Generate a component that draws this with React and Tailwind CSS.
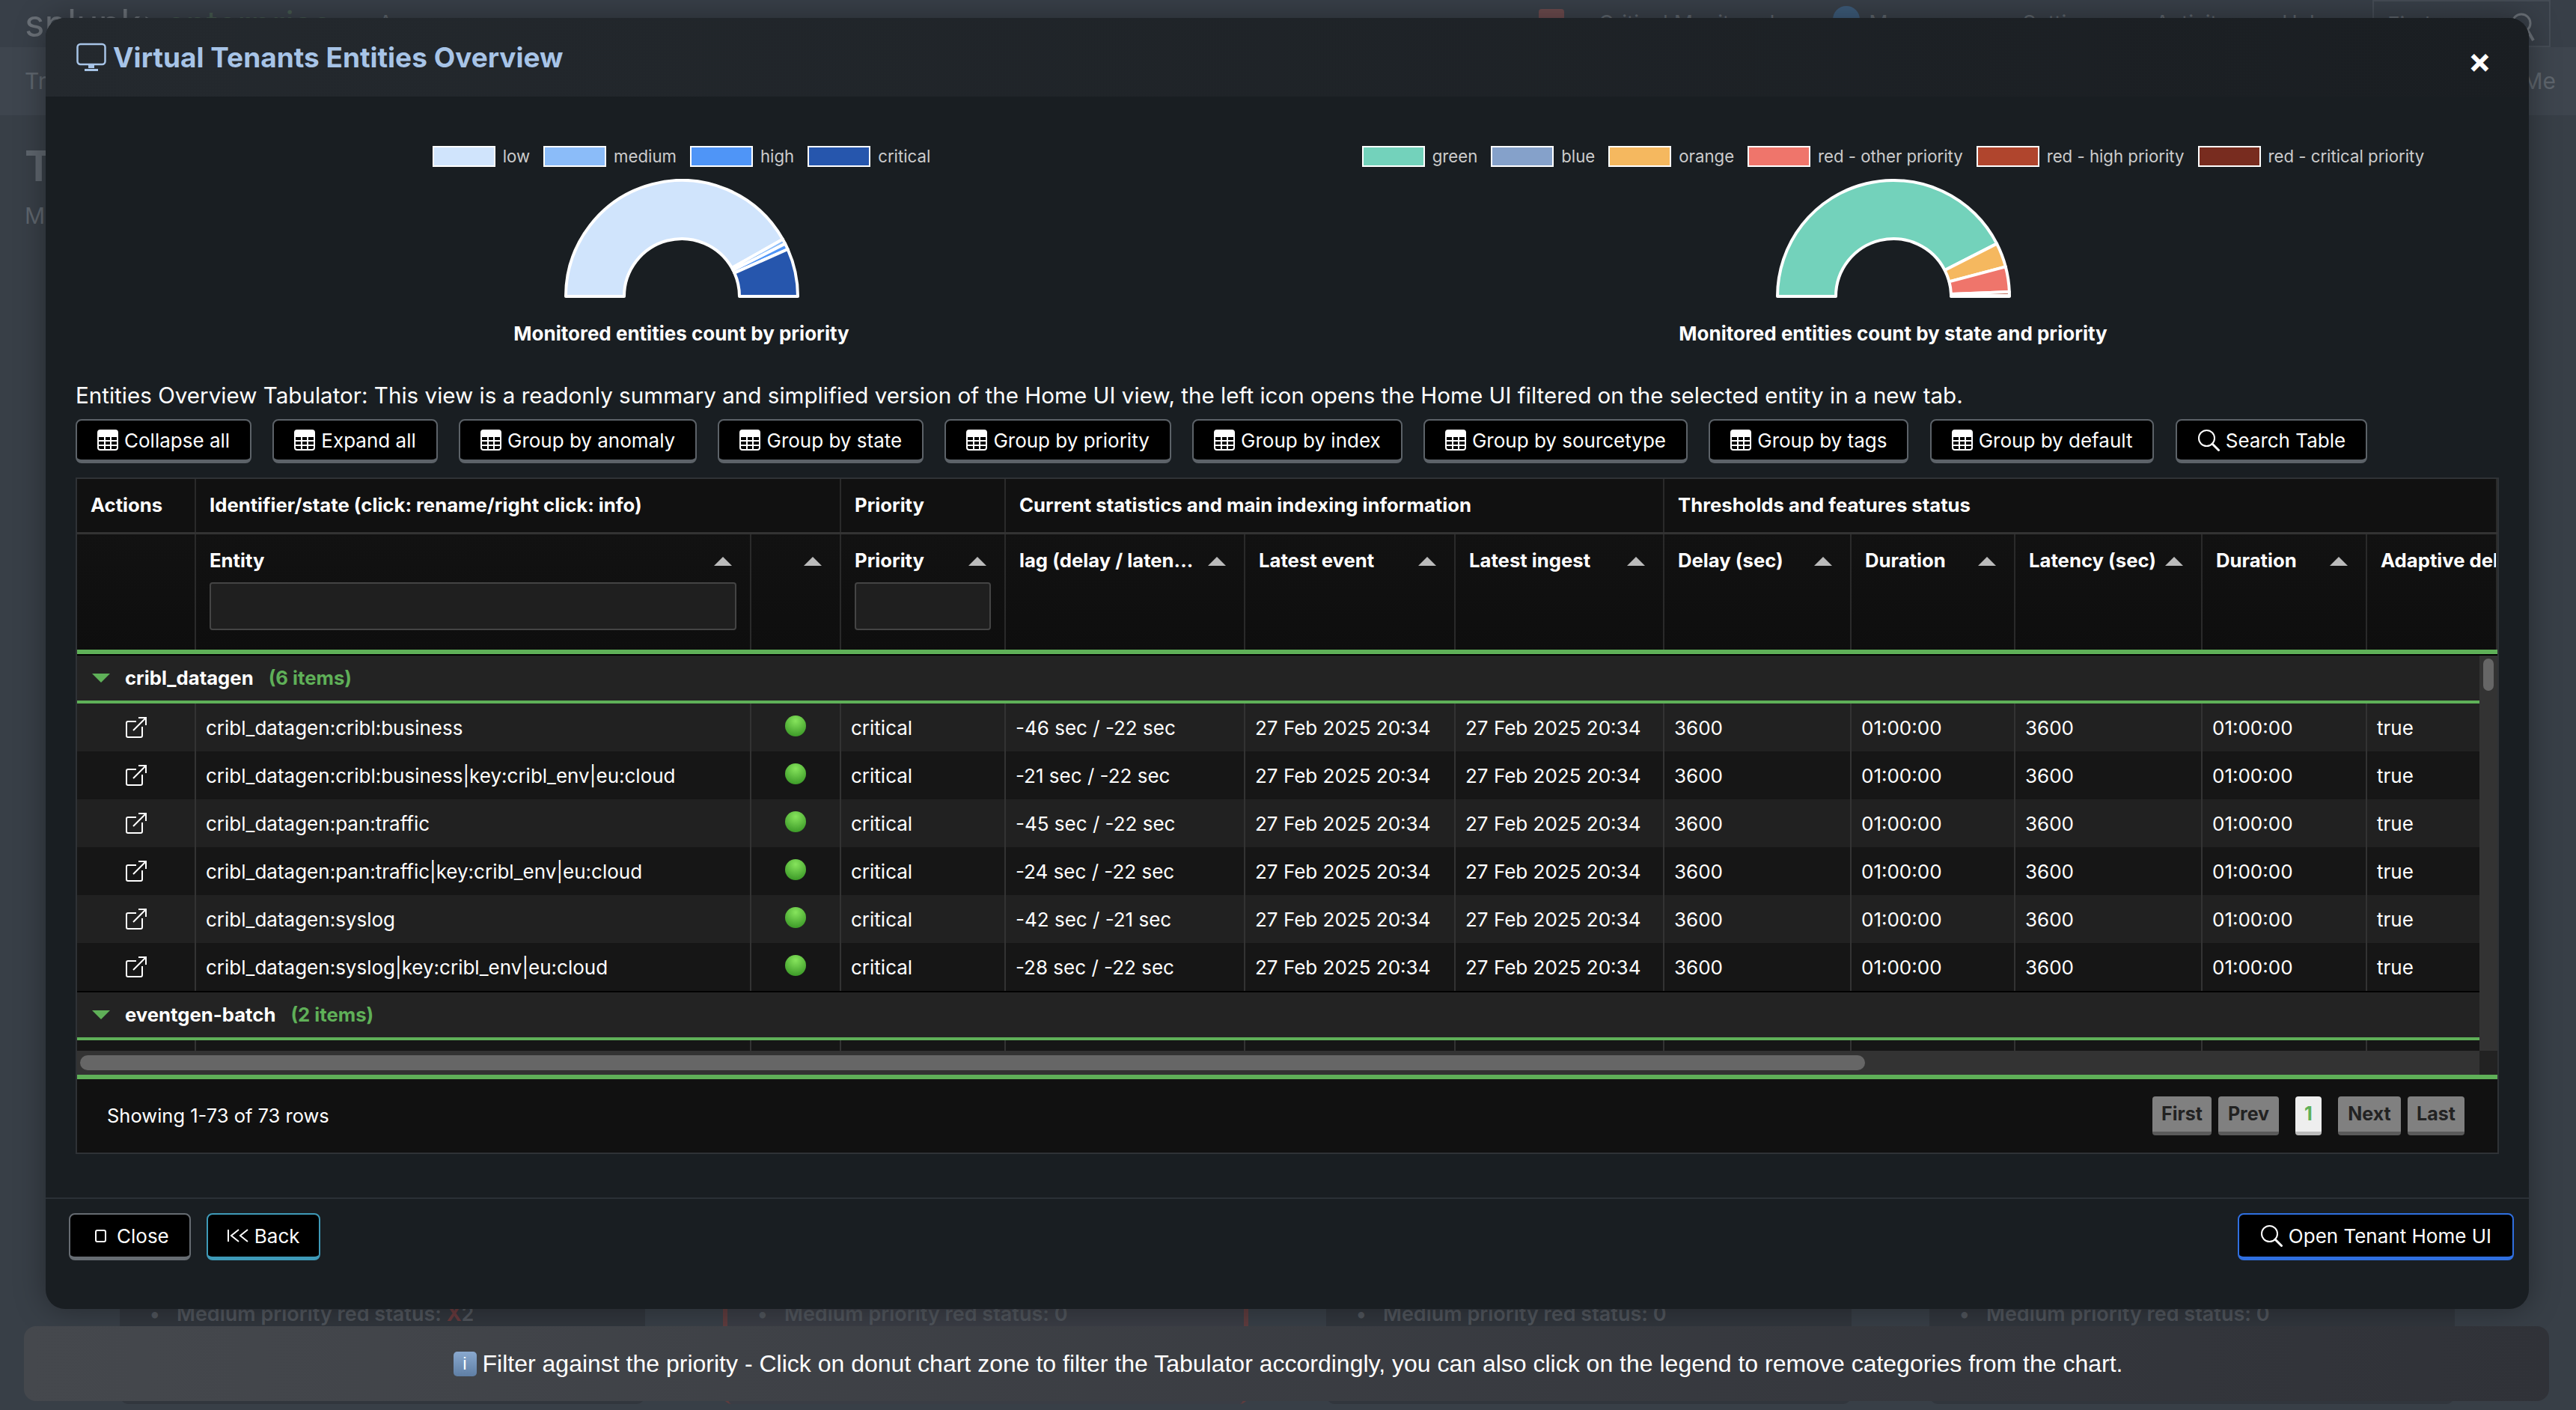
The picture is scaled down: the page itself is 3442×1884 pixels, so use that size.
import React from 'react';

const TOP_COLS = 'grid grid-cols-[159px_862px_220px_880px_1fr]';
const HEAD_COLS = 'grid grid-cols-[159px_742px_120px_220px_320px_281px_279px_250px_219px_250px_220px_1fr]';
const DATA_COLS = 'grid grid-cols-[159px_742px_120px_220px_320px_281px_279px_250px_219px_250px_220px_150px]';
const CELL = 'flex items-center pl-[13px] border-r-2 border-[#333333] whitespace-nowrap';

const CHART_ONE = {
  legend: [
    ['low', '#d0e4fc'],
    ['medium', '#8bbcf9'],
    ['high', '#4f95f7'],
    ['critical', '#2656ad'],
  ],
  slices: [
    [180, 29.5, '#d0e4fc'],
    [29.5, 27, '#8bbcf9'],
    [27, 24, '#4f95f7'],
    [24, 0, '#2656ad'],
  ],
  title: 'Monitored entities count by priority',
};

const CHART_TWO = {
  legend: [
    ['green', '#73d2bb'],
    ['blue', '#85a1ca'],
    ['orange', '#f5b85f'],
    ['red - other priority', '#ef756b'],
    ['red - high priority', '#b0452d'],
    ['red - critical priority', '#782c1f'],
  ],
  slices: [
    [180, 27, '#73d2bb'],
    [27, 14.8, '#f5b85f'],
    [14.8, 2.2, '#ef756b'],
    [2.2, 0.4, '#b0452d'],
    [0.4, 0, '#782c1f'],
  ],
  title: 'Monitored entities count by state and priority',
};

const BUTTONS = [
  'Collapse all',
  'Expand all',
  'Group by anomaly',
  'Group by state',
  'Group by priority',
  'Group by index',
  'Group by sourcetype',
  'Group by tags',
  'Group by default',
];

const HEADERS = [
  ['', false],
  ['Entity', true],
  ['', true],
  ['Priority', true],
  ['lag (delay / laten...', true],
  ['Latest event', true],
  ['Latest ingest', true],
  ['Delay (sec)', true],
  ['Duration', true],
  ['Latency (sec)', true],
  ['Duration', true],
  ['Adaptive delay', false],
];

const ROWS = [
  ['cribl_datagen:cribl:business', '-46 sec / -22 sec'],
  ['cribl_datagen:cribl:business|key:cribl_env|eu:cloud', '-21 sec / -22 sec'],
  ['cribl_datagen:pan:traffic', '-45 sec / -22 sec'],
  ['cribl_datagen:pan:traffic|key:cribl_env|eu:cloud', '-24 sec / -22 sec'],
  ['cribl_datagen:syslog', '-42 sec / -21 sec'],
  ['cribl_datagen:syslog|key:cribl_env|eu:cloud', '-28 sec / -22 sec'],
];

const point = (r, deg) => {
  const rad = (deg * Math.PI) / 180;
  return `${165 + r * Math.cos(rad)} ${157 - r * Math.sin(rad)}`;
};

const slicePath = (from, to) =>
  `M${point(155, from)} A155 155 0 0 1 ${point(155, to)} L${point(77, to)} A77 77 0 0 0 ${point(77, from)} Z`;

const Donut = ({ slices }) => (
  <svg width="330" height="160" viewBox="0 0 330 160" className="mt-[16px]">
    {slices.map(([from, to, color]) => (
      <path key={from} d={slicePath(from, to)} fill={color} stroke="#fff" strokeWidth="4" strokeLinejoin="round" />
    ))}
  </svg>
);

const Chart = ({ legend, slices, title }) => (
  <div className="flex flex-col items-center">
    <div className="flex items-center gap-[18px] h-[28px] text-[22.2px] text-[#cccccc]">
      {legend.map(([label, color]) => (
        <div key={label} className="flex items-center gap-[10px] whitespace-nowrap">
          <span className="block w-[84px] h-[28px] border-2 border-white" style={{ backgroundColor: color }} />
          {label}
        </div>
      ))}
    </div>
    <Donut slices={slices} />
    <div className="mt-[30px] text-[26px] leading-[34px] font-bold text-white">{title}</div>
  </div>
);

const TableIcon = () => (
  <svg width="28" height="28" viewBox="0 0 28 28" className="shrink-0">
    <rect x="1" y="1" width="26" height="26" rx="3" fill="none" stroke="#fff" strokeWidth="2" />
    <path d="M1 4a3 3 0 0 1 3-3h20a3 3 0 0 1 3 3v6H1z" fill="#fff" />
    <path d="M1 15h26M1 21h26M10 10v17M18 10v17" stroke="#fff" strokeWidth="2" fill="none" />
  </svg>
);

const SearchIcon = () => (
  <svg width="30" height="30" viewBox="0 0 30 30" className="shrink-0 text-white">
    <circle cx="12.5" cy="12.5" r="10.5" fill="none" stroke="currentColor" strokeWidth="2" />
    <path d="M20 20l8.5 8.5" stroke="currentColor" strokeWidth="3" strokeLinecap="round" />
  </svg>
);

const ExternalIcon = () => (
  <svg width="28" height="28" viewBox="0 0 28 28">
    <path d="M14 6H3a2 2 0 0 0-2 2v17a2 2 0 0 0 2 2h17a2 2 0 0 0 2-2V13" fill="none" stroke="#fff" strokeWidth="2" />
    <path d="M10 18L27 1M17 1h10v10" fill="none" stroke="#fff" strokeWidth="2" />
  </svg>
);

const ActionButton = ({ children, className }) => (
  <button className={`flex items-center rounded-[8px] bg-black border-x-2 border-t-2 border-b-[5px] text-[26px] text-white whitespace-nowrap ${className}`}>
    {children}
  </button>
);

const SortArrow = () => (
  <span className="block ml-auto w-0 h-0 border-x-[12px] border-x-transparent border-b-[12px] border-b-[#bbbbbb] shrink-0" />
);

const GroupRow = ({ name, count, className }) => (
  <div className={`flex items-center bg-[#232323] border-b-4 border-[#5fb058] text-[25.7px] font-bold ${className}`}>
    <span className="block ml-[20px] mr-[20px] w-0 h-0 border-x-[12px] border-x-transparent border-t-[12px] border-t-[#5fb058]" />
    <span className="text-white">{name}</span>
    <span className="ml-[20px] text-[#5fb058]">{count}</span>
  </div>
);

const PageButton = ({ children, className }) => (
  <button className={`flex items-center justify-center h-[52px] rounded-[4px] border-b-[5px] text-[25px] font-bold ${className}`}>
    {children}
  </button>
);

const Backdrop = () => (
  <div className="flex flex-col h-full text-[#5e656d]">
    <div className="flex items-start h-[63px] bg-[#383f48]">
      <span className="ml-[33px] mt-[6px] text-[50px] leading-[50px] text-[#6a7077]">splunk&gt;</span>
      <span className="mt-[6px] text-[46px] leading-[50px] text-[#45594f]">enterprise</span>
      <span className="ml-[62px] mt-[10px] text-[28px]">Apps</span>
      <div className="ml-auto flex items-start">
        <span className="block mt-[12px] w-[34px] h-[40px] rounded-[4px] bg-[#6b4a4d]" />
        <span className="ml-[46px] mt-[10px] text-[28px]">Critical Monitored</span>
        <span className="ml-[78px] mt-[8px] block w-[36px] h-[48px] rounded-full bg-[#3c5a78]" />
        <span className="ml-[12px] mt-[10px] text-[28px]">Messages</span>
        <span className="ml-[70px] mt-[10px] text-[28px]">Settings</span>
        <span className="ml-[70px] mt-[10px] text-[28px]">Activity</span>
        <span className="ml-[70px] mt-[10px] text-[28px]">Help</span>
        <div className="ml-[60px] mr-[34px] flex items-start justify-between w-[238px] h-[63px] px-[18px] pt-[10px] border-2 border-[#454c55]">
          <span className="text-[28px]">Find</span>
          <svg width="34" height="40" viewBox="0 0 34 40" className="mt-[4px] text-[#6a7077]">
            <circle cx="15" cy="15" r="12" fill="none" stroke="currentColor" strokeWidth="3" />
            <path d="M23 24l8 14" stroke="currentColor" strokeWidth="4" />
          </svg>
        </div>
      </div>
    </div>
    <div className="flex items-center justify-between h-[91px] px-[33px] bg-[#3e454e] text-[30px]">
      <span>Tr</span>
      <span className="mr-[-6px]">Me</span>
    </div>
    <div className="pl-[33px] pt-[36px] text-[56px] leading-[64px] font-bold">Tr</div>
    <div className="pl-[33px] pt-[12px] text-[30px]">Mo</div>
    <div className="mt-auto flex gap-[104px] pl-[160px] h-[160px] pb-[8px] text-[27px] text-[#50555c] font-semibold">
      {['2', '0', '0', '0'].map((value, index) => (
        <div
          key={index}
          className={`flex w-[702px] pt-[12px] pl-[40px] rounded-b-[12px] whitespace-nowrap ${index === 1 ? 'bg-[#3a3d45] border-x-[6px] border-[#5f3c3e]' : 'bg-[#31363d]'}`}
        >
          <span className="w-[36px]">•</span>
          <span>
            Medium priority red status: {index === 0 && <span className="text-[#683a3d] font-bold">X</span>}{value}
          </span>
        </div>
      ))}
    </div>
  </div>
);

const App = () => (
  <div className="relative w-[3442px] h-[1884px] overflow-hidden bg-[#383f47] [font-family:Inter,sans-serif]">
    <Backdrop />

    <div className="absolute left-[61px] top-[24px] w-[3318px] h-[1725px] rounded-[26px] overflow-hidden bg-[#191e22] shadow-[0_0_40px_rgba(0,0,0,0.35)] flex flex-col">
      <div className="flex items-center justify-between h-[105px] shrink-0 pl-[41px] pr-[50px] bg-gradient-to-r from-[#24292e] to-[#1a1e22]">
        <div className="flex items-center gap-[9px] text-[37px] font-bold text-[#a7c4e7]">
          <svg width="40" height="40" viewBox="0 0 40 40" className="shrink-0">
            <rect x="1.5" y="2" width="37" height="27" rx="4" fill="none" stroke="#a7c4e7" strokeWidth="2.5" />
            <path d="M16 29h8v5h-8zM11 35h18v3H11z" fill="#a7c4e7" />
          </svg>
          Virtual Tenants Entities Overview
        </div>
        <span className="pt-[6px] text-[46px] font-bold text-white leading-none">×</span>
      </div>

      <div className="flex-1 px-[40px]">
        <div className="grid grid-cols-[1619px_1619px] pt-[66px]">
          <Chart {...CHART_ONE} />
          <Chart {...CHART_TWO} />
        </div>

        <p className="mt-[48px] text-[29.6px] leading-[34px] text-white whitespace-nowrap">
          Entities Overview Tabulator: This view is a readonly summary and simplified version of the Home UI view, the left icon opens the Home UI filtered on the selected entity in a new tab.
        </p>

        <div className="flex gap-[28.25px] mt-[15px]">
          {BUTTONS.map((label) => (
            <ActionButton key={label} className="h-[59px] gap-[8px] px-[27px] border-[#5c6268]">
              <TableIcon />
              {label}
            </ActionButton>
          ))}
          <ActionButton className="h-[59px] gap-[8px] px-[27px] border-[#5c6268]">
            <SearchIcon />
            Search Table
          </ActionButton>
        </div>

        <div className="mt-[19px] w-[3238px] border-2 border-[#2f3236] text-white text-[26px] overflow-hidden">
          <div className={`${TOP_COLS} h-[74px] bg-[#111111] border-b-[3px] border-[#333333] font-bold text-[25.7px]`}>
            {[
              'Actions',
              'Identifier/state (click: rename/right click: info)',
              'Priority',
              'Current statistics and main indexing information',
              'Thresholds and features status',
            ].map((label) => (
              <div key={label} className="flex items-center pl-[18px] border-r-2 border-[#2a2a2a] whitespace-nowrap">
                {label}
              </div>
            ))}
          </div>

          <div className={`${HEAD_COLS} h-[154px] bg-gradient-to-b from-[#121212] to-[#0e0e0e] font-bold text-[25.7px]`}>
            {HEADERS.map(([label, sorted], index) => (
              <div key={index} className="flex flex-col gap-[11px] pl-[18px] pt-[18px] pr-[18px] border-r-2 border-[#2a2a2a] overflow-hidden">
                <div className="flex items-center h-[35px] mr-[6px] whitespace-nowrap">
                  {label}
                  {sorted && <SortArrow />}
                </div>
                {(index === 1 || index === 3) && (
                  <div className="h-[64px] bg-[#1f1f1f] border-2 border-[#444444] rounded-[4px]" />
                )}
              </div>
            ))}
          </div>

          <div className="h-[6px] bg-[#5fb058]" />
          <div className="h-[2px] bg-black" />

          <div className="flex h-[528px]">
            <div className="w-[3210px] flex flex-col overflow-hidden">
              <GroupRow name="cribl_datagen" count="(6 items)" className="h-[64px] shrink-0" />
              {ROWS.map(([entity, lag], index) => (
                <div
                  key={entity}
                  className={`${DATA_COLS} h-[64px] shrink-0 ${index % 2 === 0 ? 'bg-[#212121]' : 'bg-[#161616]'}`}
                >
                  <div className="flex items-center justify-center border-r-2 border-[#333333]"><ExternalIcon /></div>
                  <div className={CELL}>{entity}</div>
                  <div className="flex items-center justify-center border-r-2 border-[#333333]">
                    <span className="block w-[28px] h-[28px] mb-[5px] rounded-full bg-[radial-gradient(circle_at_50%_25%,#86e45c,#2e8c1e)]" />
                  </div>
                  <div className={CELL}>critical</div>
                  <div className={CELL}>{lag}</div>
                  <div className={CELL}>27 Feb 2025 20:34</div>
                  <div className={CELL}>27 Feb 2025 20:34</div>
                  <div className={CELL}>3600</div>
                  <div className={CELL}>01:00:00</div>
                  <div className={CELL}>3600</div>
                  <div className={CELL}>01:00:00</div>
                  <div className="flex items-center pl-[13px]">true</div>
                </div>
              ))}
              <div className="h-[2px] shrink-0 bg-black" />
              <GroupRow name="eventgen-batch" count="(2 items)" className="h-[64px] shrink-0" />
              <div className={`${DATA_COLS} h-[14px] shrink-0 bg-[#161616]`}>
                {Array.from({ length: 11 }).map((_, index) => (
                  <div key={index} className="border-r-2 border-[#333333]" />
                ))}
              </div>
            </div>
            <div className="w-[24px] flex justify-center pt-[4px] bg-[#333333]">
              <div className="w-[14px] h-[43px] rounded-full bg-[#666666]" />
            </div>
          </div>

          <div className="flex h-[32px]">
            <div className="w-[3210px] py-[6px] pl-[4px] bg-[#333333]">
              <div className="w-[2385px] h-[20px] rounded-full bg-[#666666]" />
            </div>
            <div className="flex-1 bg-[#222222]" />
          </div>

          <div className="h-[6px] bg-[#5fb058]" />

          <div className="flex items-center justify-between h-[98px] pl-[40px] pr-[44px] bg-[#111111]">
            <span className="text-[25.5px]">Showing 1-73 of 73 rows</span>
            <div className="flex items-center gap-[9px]">
              <PageButton className="w-[79px] bg-[#808080] border-[#5a5a5a] text-[#222222]">First</PageButton>
              <PageButton className="w-[81px] bg-[#808080] border-[#5a5a5a] text-[#222222]">Prev</PageButton>
              <PageButton className="w-[35px] mx-[13px] bg-[#eeeeee] border-[#bbbbbb] text-[#5fb058]">1</PageButton>
              <PageButton className="w-[84px] bg-[#808080] border-[#5a5a5a] text-[#222222]">Next</PageButton>
              <PageButton className="w-[76px] bg-[#808080] border-[#5a5a5a] text-[#222222]">Last</PageButton>
            </div>
          </div>
        </div>
      </div>

      <div className="flex items-start justify-between h-[149px] shrink-0 pt-[19px] pl-[31px] pr-[20px] border-t-2 border-[#2a3036]">
        <div className="flex gap-[21px]">
          <ActionButton className="h-[63px] gap-[14px] pl-[33px] pr-[27px] border-[#666c72]">
            <span className="block w-[15px] h-[17px] rounded-[3px] border-2 border-white" />
            Close
          </ActionButton>
          <ActionButton className="h-[63px] gap-[7px] px-[25px] border-[#3e9ab8]">
            <svg width="30" height="18" viewBox="0 0 30 18" className="shrink-0">
              <path d="M2 1v16M16 1L6 9l10 8M28 1L18 9l10 8" fill="none" stroke="#fff" strokeWidth="2" />
            </svg>
            Back
          </ActionButton>
        </div>
        <ActionButton className="h-[63px] gap-[8px] px-[28px] rounded-[4px] border-[#2f6fe0]">
          <SearchIcon />
          Open Tenant Home UI
        </ActionButton>
      </div>
    </div>

    <div className="absolute left-[32px] top-[1772px] w-[3374px] h-[100px] pl-[4px] rounded-[16px] flex items-center justify-center gap-[8px] bg-gradient-to-r from-[#45484d] to-[#303238] text-[32px] text-white [font-family:'Liberation_Sans',Arial,sans-serif]">
      <span className="flex items-center justify-center w-[31px] h-[33px] rounded-[5px] bg-gradient-to-b from-[#8aa9cf] to-[#5f7fa5] text-[24px] leading-none">i</span>
      Filter against the priority - Click on donut chart zone to filter the Tabulator accordingly, you can also click on the legend to remove categories from the chart.
    </div>
  </div>
);

export default App;
